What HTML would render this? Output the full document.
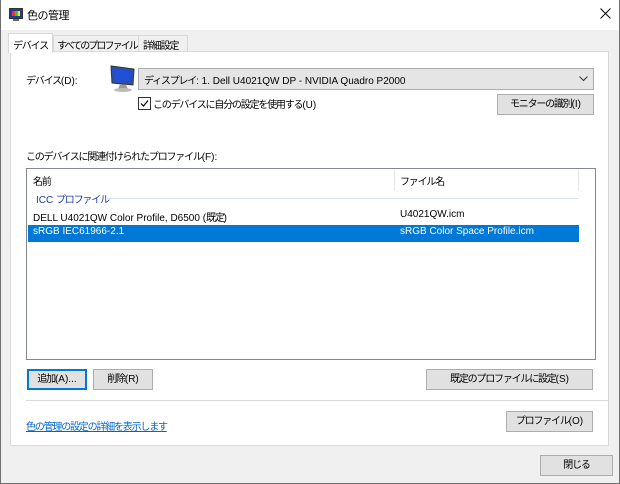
<!DOCTYPE html>
<html><head><meta charset="utf-8"><style>
*{margin:0;padding:0;box-sizing:border-box}
body{width:620px;height:484px;background:#f0f0f0;font-family:"Liberation Sans","Noto Sans CJK JP",sans-serif;font-size:10px;color:#000;position:relative;overflow:hidden}
.a{position:absolute;white-space:nowrap}
.j{letter-spacing:-1.2px}
.btn{position:absolute;background:#e1e1e1;border:1px solid #adadad;text-align:center;line-height:19px;font-size:10px;white-space:nowrap}
</style></head><body>
<div class="a" style="left:0;top:0;width:620px;height:30px;background:#fff"></div>
<div class="a" style="left:0;top:0;width:1px;height:484px;background:#6e6e6e"></div>
<div class="a" style="right:0;top:0;width:1px;height:484px;background:#6e6e6e"></div>
<div class="a" style="left:0;bottom:0;width:620px;height:1px;background:#6e6e6e"></div>
<svg class="a" style="left:9px;top:8px" width="14" height="14"><rect x="0.5" y="0.5" width="13" height="10" fill="#1a3f9a" stroke="#333"/><rect x="3" y="3" width="3" height="5" fill="#e33"/><rect x="6" y="3" width="3" height="5" fill="#3c3"/><rect x="9" y="3" width="2" height="5" fill="#fd3"/><rect x="4" y="11" width="6" height="2" fill="#666"/></svg>
<div class="a" style="left:27px;top:7px;font-size:11px"><span style="letter-spacing:-0.5px">色の管理</span></div>
<svg class="a" style="left:600px;top:8px" width="11" height="11"><path d="M0.5 0.5L10.5 10.5M10.5 0.5L0.5 10.5" stroke="#000" stroke-width="1"/></svg>

<div class="a" style="left:10px;top:51px;width:599px;height:395px;background:#fff;border:1px solid #d9d9d9"></div>
<div class="a" style="left:8px;top:33px;width:45px;height:20px;background:#fff;border:1px solid #d9d9d9;border-bottom:none;padding:3px 0 0 4px"><span class="j">デバイス</span></div>
<div class="a" style="left:53px;top:35px;width:86px;height:16px;background:#f0f0f0;border:1px solid #d9d9d9;border-bottom:none;padding:1px 0 0 3px;overflow:hidden"><span style="letter-spacing:-1.9px">すべてのプロファイル</span></div>
<div class="a" style="left:139px;top:35px;width:49px;height:16px;background:#f0f0f0;border:1px solid #d9d9d9;border-bottom:none;border-left:none;padding:1px 0 0 4px"><span class="j">詳細設定</span></div>

<div class="a" style="left:26px;top:72px"><span class="j">デバイス</span>(D):</div>
<svg class="a" style="left:108px;top:64px" width="28" height="30"><path d="M3 2L26 5L25 21L4 19Z" fill="#2a4fb0" stroke="#333"/><path d="M6 5L23 7L22 18L7 17Z" fill="#1e50d8"/><path d="M12 20L18 21L20 25L10 25Z" fill="#999"/><ellipse cx="15" cy="26" rx="9" ry="2" fill="#bbb"/></svg>
<div class="a" style="left:138px;top:68px;width:456px;height:22px;background:#e5e5e5;border:1px solid #adadad;padding:3px 0 0 5px"><span class="j">ディスプレイ</span>: 1. Dell U4021QW DP - NVIDIA Quadro P2000</div>
<svg class="a" style="left:579px;top:76px" width="9" height="6"><path d="M0.5 0.5L4.5 4.5L8.5 0.5" stroke="#333" fill="none"/></svg>
<div class="a" style="left:138px;top:97px;width:13px;height:13px;border:1px solid #333;background:#fff"></div>
<svg class="a" style="left:139px;top:98px" width="11" height="11"><path d="M2 5.5L4.5 8L9 2.5" stroke="#000" stroke-width="1.2" fill="none"/></svg>
<div class="a" style="left:153px;top:96px"><span class="j">このデバイスに自分の設定を使用する</span>(U)</div>
<div class="btn" style="left:497px;top:94px;width:97px;height:21px"><span class="j">モニターの識別</span>(I)</div>

<div class="a" style="left:26px;top:148px"><span class="j">このデバイスに関連付けられたプロファイル</span>(F):</div>
<div class="a" style="left:26px;top:168px;width:570px;height:192px;border:1px solid #828790;background:#fff"></div>
<div class="a" style="left:394px;top:170px;width:1px;height:21px;background:#e5e5e5"></div>
<div class="a" style="left:578px;top:170px;width:1px;height:21px;background:#e5e5e5"></div>
<div class="a" style="left:33px;top:173px"><span class="j">名前</span></div>
<div class="a" style="left:400px;top:173px"><span class="j">ファイル名</span></div>
<div class="a" style="left:36px;top:191px;color:#1e3caa">ICC <span class="j">プロファイル</span></div>
<div class="a" style="left:108px;top:198px;width:470px;height:1px;background:#dde3f0"></div>
<div class="a" style="left:33px;top:209px">DELL U4021QW Color Profile, D6500 (<span class="j">既定</span>)</div>
<div class="a" style="left:400px;top:209px">U4021QW.icm</div>
<div class="a" style="left:28px;top:225px;width:551px;height:17px;background:#0078d7"></div>
<div class="a" style="left:33px;top:226px;color:#fff">sRGB IEC61966-2.1</div>
<div class="a" style="left:400px;top:226px;color:#fff">sRGB Color Space Profile.icm</div>

<div class="btn" style="left:27px;top:369px;width:60px;height:21px;border:1px solid #0078d7;box-shadow:inset 0 0 0 1px #0078d7"><span class="j">追加</span>(A)...</div>
<div class="btn" style="left:93px;top:369px;width:60px;height:21px"><span class="j">削除</span>(R)</div>
<div class="btn" style="left:426px;top:369px;width:167px;height:21px"><span class="j">既定のプロファイルに設定</span>(S)</div>
<div class="a" style="left:26px;top:400px;width:583px;height:1px;background:#d9d9d9"></div>
<div class="a" style="left:26px;top:418px;color:#0066cc;text-decoration:underline"><span class="j">色の管理の設定の詳細を表示します</span></div>
<div class="btn" style="left:506px;top:411px;width:87px;height:21px"><span class="j">プロファイル</span>(O)</div>
<div class="btn" style="left:540px;top:455px;width:73px;height:21px"><span class="j">閉じる</span></div>
</body></html>
